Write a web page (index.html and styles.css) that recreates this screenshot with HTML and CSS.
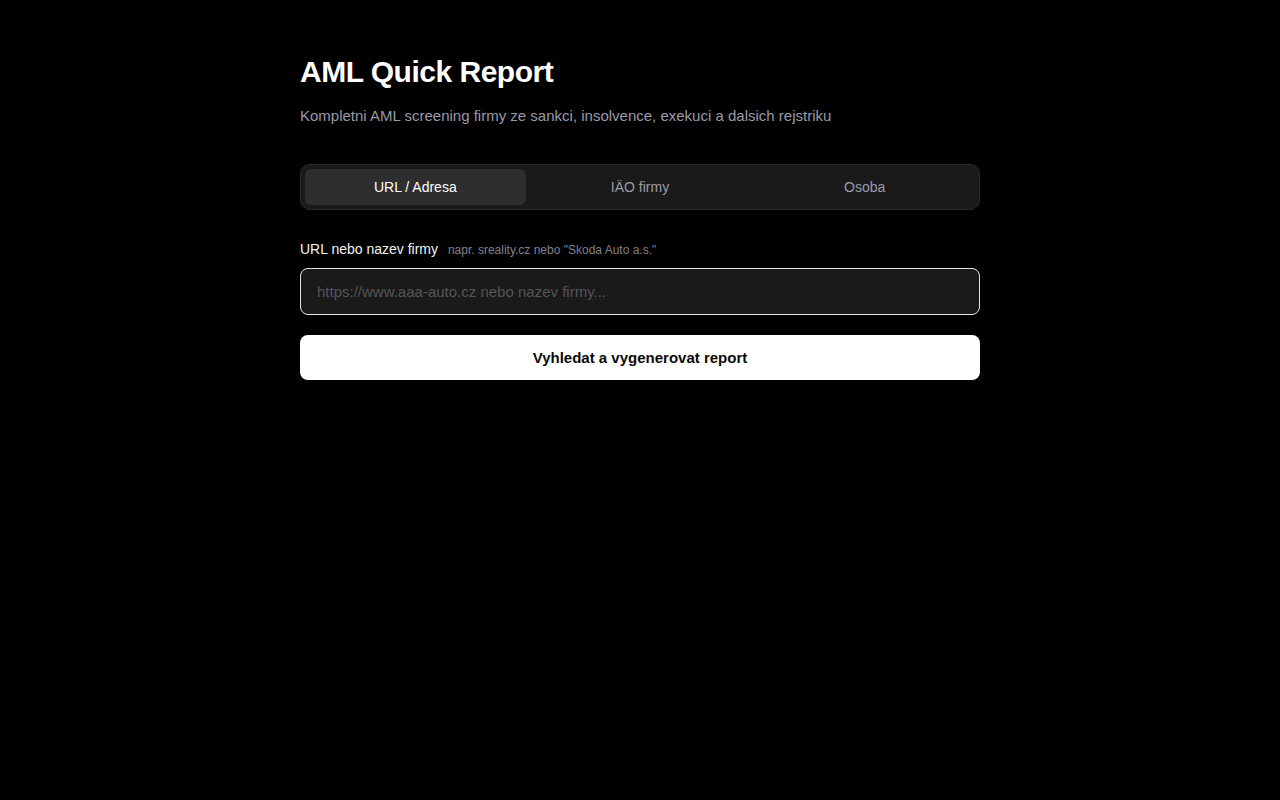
FILE: index.html
```html
<!DOCTYPE html>
<html lang="cs">
<head>
<meta charset="utf-8">
<title>AML Quick Report</title>
<link rel="stylesheet" href="styles.css">
</head>
<body>
<main class="page">
  <h1 class="title">AML Quick Report</h1>
  <p class="subtitle">Kompletni AML screening firmy ze sankci, insolvence, exekuci a dalsich rejstriku</p>
  <div class="tabs">
    <button class="tab active">URL / Adresa</button>
    <button class="tab">IÄO firmy</button>
    <button class="tab">Osoba</button>
  </div>
  <div class="field">
    <label class="label" for="q">URL nebo nazev firmy <span class="hint">napr. sreality.cz nebo "Skoda Auto a.s."</span></label>
    <input id="q" class="input" type="text" placeholder="https://www.aaa-auto.cz nebo nazev firmy..." autofocus>
  </div>
  <button class="submit">Vyhledat a vygenerovat report</button>
</main>
</body>
</html>
```

FILE: styles.css
```css
html, body {
  margin: 0;
  padding: 0;
  background: #000;
  color: #fff;
  font-family: "Liberation Sans", Arial, sans-serif;
}
.page {
  width: 680px;
  margin: 0 auto;
  padding-top: 54px;
}
.title {
  margin: 0;
  font-size: 30px;
  line-height: 36px;
  font-weight: 700;
  letter-spacing: -0.5px;
  color: #fff;
}
.subtitle {
  margin: 15px 0 0;
  font-size: 15px;
  line-height: 22px;
  color: #9a9aa8;
}
.tabs {
  margin-top: 37px;
  display: grid;
  grid-template-columns: 1fr 1fr 1fr;
  gap: 4px;
  padding: 4px;
  background: #1a1a1a;
  border: 1px solid #2b2b2b;
  border-radius: 10px;
}
.tab {
  height: 36px;
  border: 0;
  border-radius: 6px;
  background: transparent;
  color: #9a9aa8;
  font-family: "Liberation Sans", Arial, sans-serif;
  font-size: 14px;
  cursor: pointer;
}
.tab.active {
  background: #2e2e2e;
  color: #fff;
}
.field {
  margin-top: 30px;
}
.label {
  display: block;
  font-size: 14px;
  line-height: 18px;
  color: #f2f2f2;
  margin-bottom: 9px;
}
.hint {
  margin-left: 6px;
  font-size: 12px;
  color: #80808c;
}
.input {
  box-sizing: border-box;
  display: block;
  width: 100%;
  height: 47px;
  padding: 0 16px;
  background: #1a1a1a;
  border: 1px solid #e6e6e6;
  border-radius: 8px;
  color: #fff;
  caret-color: #fff;
  font-family: "Liberation Sans", Arial, sans-serif;
  font-size: 15px;
  outline: none;
}
.input::placeholder {
  color: #555559;
}
.submit {
  margin-top: 20px;
  display: block;
  width: 100%;
  height: 45px;
  border: 0;
  border-radius: 8px;
  background: #fff;
  color: #0a0a0a;
  font-family: "Liberation Sans", Arial, sans-serif;
  font-size: 15px;
  font-weight: 700;
  cursor: pointer;
}
```
